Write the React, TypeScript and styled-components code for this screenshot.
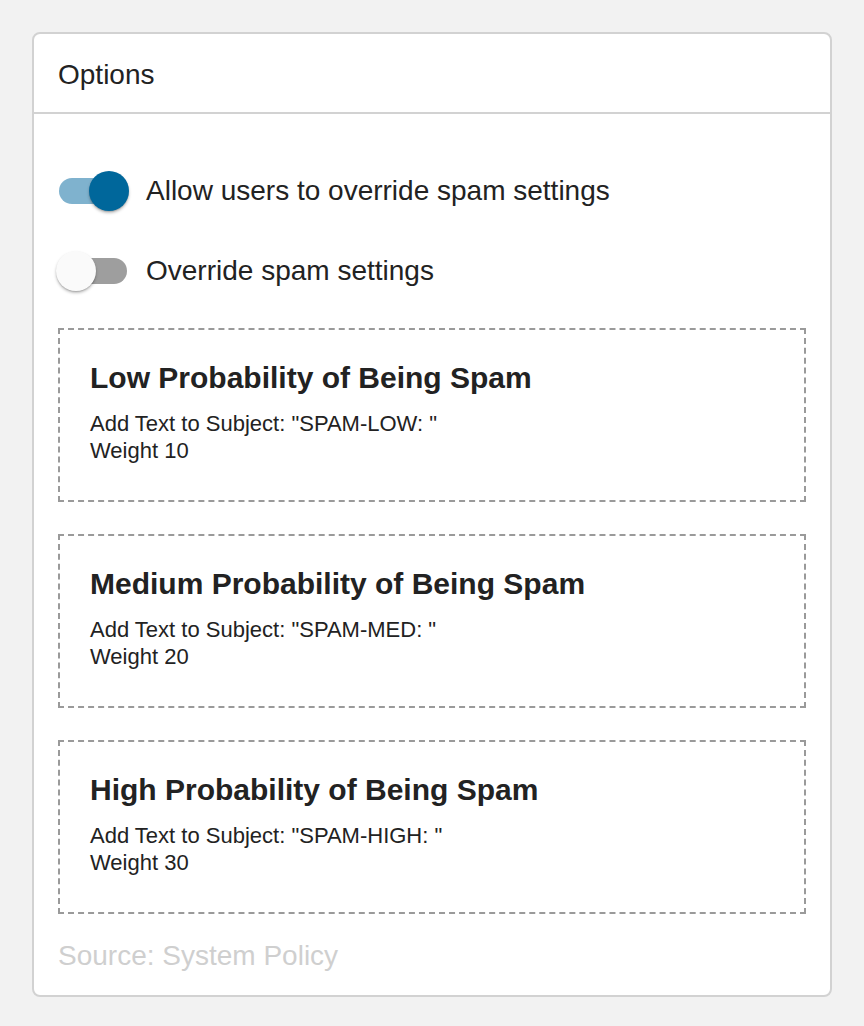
import React from 'react'
import styled, { createGlobalStyle } from 'styled-components'

const GlobalStyle = createGlobalStyle`
  html, body {
    margin: 0;
    padding: 0;
    background: #f2f2f2;
  }
  body {
    font-family: "Liberation Sans", Arial, sans-serif;
    color: #222;
  }
`

const Page = styled.div`
  padding: 32px 32px 30px 32px;
`

const Card = styled.div`
  background: #fff;
  border: 2px solid #d2d2d2;
  border-radius: 8px;
  overflow: hidden;
`

const CardHeader = styled.div`
  height: 74px;
  display: flex;
  align-items: center;
  padding: 4px 24px 0;
  font-size: 28px;
  border-bottom: 2px solid #d2d2d2;
`

const CardBody = styled.div`
  display: flex;
  flex-direction: column;
  padding: 53px 24px 23px;
`

const ToggleRow = styled.label`
  display: flex;
  align-items: center;
  height: 48px;
  margin-bottom: 32px;

  &:nth-of-type(2) {
    margin-bottom: 33px;
  }
`

const Switch = styled.span`
  position: relative;
  width: 72px;
  height: 48px;
  flex-shrink: 0;
`

const Track = styled.span<{ $on: boolean }>`
  position: absolute;
  left: 1px;
  top: 11px;
  width: 68px;
  height: 26px;
  border-radius: 13px;
  background: ${(p) => (p.$on ? '#7fb2ce' : '#9e9e9e')};
`

const Thumb = styled.span<{ $on: boolean }>`
  position: absolute;
  top: 4px;
  left: ${(p) => (p.$on ? '31px' : '-2px')};
  width: 40px;
  height: 40px;
  border-radius: 50%;
  background: ${(p) => (p.$on ? '#00679b' : '#fafafa')};
  box-shadow: 0 2px 3px rgba(0, 0, 0, 0.25), 0 1px 1px rgba(0, 0, 0, 0.12);
`

const ToggleLabel = styled.span`
  margin-left: 16px;
  font-size: 28px;
`

const LevelList = styled.div`
  display: flex;
  flex-direction: column;
  gap: 32px;
  margin-bottom: 26px;
`

const Level = styled.div`
  border: 2px dashed #9a9a9a;
  padding: 30px 30px 36px;
`

const LevelTitle = styled.h3`
  margin: 0 0 14px;
  font-size: 30px;
  line-height: 36px;
  font-weight: 700;
`

const LevelLine = styled.div`
  font-size: 22px;
  line-height: 27px;
`

const Source = styled.div`
  font-size: 28px;
  line-height: 32px;
  color: #cfcfcf;
`

type ToggleProps = { on: boolean; label: string }

const Toggle: React.FC<ToggleProps> = ({ on, label }) => (
  <ToggleRow>
    <Switch>
      <Track $on={on} />
      <Thumb $on={on} />
    </Switch>
    <ToggleLabel>{label}</ToggleLabel>
  </ToggleRow>
)

const levels = [
  { name: 'Low', tag: 'SPAM-LOW', weight: 10 },
  { name: 'Medium', tag: 'SPAM-MED', weight: 20 },
  { name: 'High', tag: 'SPAM-HIGH', weight: 30 },
]

const App: React.FC = () => {
  return (
    <Page>
      <GlobalStyle />
      <Card>
        <CardHeader>Options</CardHeader>
        <CardBody>
          <Toggle on label="Allow users to override spam settings" />
          <Toggle on={false} label="Override spam settings" />

          <LevelList>
            {levels.map((l) => (
              <Level key={l.name}>
                <LevelTitle>{l.name} Probability of Being Spam</LevelTitle>
                <LevelLine>Add Text to Subject: "{l.tag}: "</LevelLine>
                <LevelLine>Weight {l.weight}</LevelLine>
              </Level>
            ))}
          </LevelList>

          <Source>Source: System Policy</Source>
        </CardBody>
      </Card>
    </Page>
  )
}

export default App
